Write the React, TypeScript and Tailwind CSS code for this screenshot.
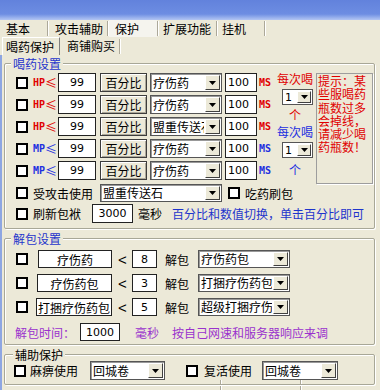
import React from "react";

type P = { className?: string; children?: React.ReactNode };

const num = "font-['DejaVu_Sans',sans-serif] text-[11px]";
const mono = "font-['DejaVu_Sans_Mono',monospace] text-[10px] font-bold";

function Check({ className = "" }: P) {
  return <span className={`block h-[12px] w-[12px] shrink-0 border-2 border-black bg-white ${className}`} />;
}

// white edit box
function Box({ className = "", children }: P) {
  return (
    <div className={`flex h-full shrink-0 items-center border border-[#222] bg-white ${className}`}>
      {children}
    </div>
  );
}

function Btn({ className = "", children }: P) {
  return (
    <div
      className={`flex h-full shrink-0 items-center justify-center border border-[#3c3c3c] bg-[#ECE9D8] shadow-[inset_1px_1px_0_#fff,inset_-1px_-1px_0_#aca899] ${className}`}
    >
      {children}
    </div>
  );
}

function Arrow() {
  return (
    <svg width="7" height="4" viewBox="0 0 7 4">
      <path d="M0 0h7L3.5 4z" fill="#000" />
    </svg>
  );
}

function Combo({ className = "", children }: P) {
  return (
    <div className={`flex h-full shrink-0 border border-[#555] bg-white shadow-[inset_1px_1px_0_#999] ${className}`}>
      <span className="flex min-w-0 flex-1 items-center overflow-hidden whitespace-nowrap pl-[2px] leading-none">
        {children}
      </span>
      <span className="m-[1px] flex w-[15px] shrink-0 items-center justify-center border border-white border-r-[#404040] border-b-[#404040] bg-[#ECE9D8]">
        <Arrow />
      </span>
    </div>
  );
}

function Sep() {
  return <span className="h-[15px] w-[2px] shrink-0 self-center border-l border-r border-[#aca899] border-r-white" />;
}

function Group({ title, className = "", titleClass = "", children }: P & { title: string; titleClass?: string }) {
  return (
    <div
      className={`relative ml-[2px] w-[371px] shrink-0 rounded-[2px] border border-[#a8a797] shadow-[inset_1px_1px_0_#fff,1px_1px_0_#fff] ${className}`}
    >
      <span className={`absolute top-[-7px] bg-[#ECE9D8] px-[2px] leading-[13px] ${titleClass}`}>{title}</span>
      {children}
    </div>
  );
}

function PotRow({ kind, item }: { kind: "HP" | "MP"; item: string }) {
  const color = kind === "HP" ? "text-[#e00000]" : "text-[#1d2fe0]";
  return (
    <div className="flex h-[19px] items-center">
      <Check className="ml-[11px]" />
      <span className={`ml-[5px] flex w-[22px] items-center ${color}`}>
        <span className={mono}>{kind}</span>
        <span className="text-[12px] leading-none">≤</span>
      </span>
      <Box className={`ml-[3px] w-[38px] justify-center ${num}`}>99</Box>
      <Btn className="ml-[4px] w-[47px]">百分比</Btn>
      <Combo className="ml-[3px] w-[72px]">{item}</Combo>
      <Box className={`ml-[3px] w-[32px] pl-[2px] ${num}`}>100</Box>
      <span className={`ml-[2px] ${mono} ${color}`}>MS</span>
    </div>
  );
}

function SmallCombo({ className = "" }: P) {
  return (
    <div className={`flex h-[16px] w-[31px] self-end border border-[#555] bg-white ${className}`}>
      <span className={`flex flex-1 items-center pl-[2px] ${num}`}>1</span>
      <span className="m-[1px] flex w-[14px] items-center justify-center border border-white border-r-[#404040] border-b-[#404040] bg-[#ECE9D8]">
        <Arrow />
      </span>
    </div>
  );
}

function UnpackRow({ label, n, item, lab }: { label: string; n: string; item: string; lab: string }) {
  return (
    <div className="flex h-[18px] items-center">
      <Check className="ml-[11px]" />
      <Box className={`justify-center whitespace-nowrap ${lab}`}>{label}</Box>
      <span className="ml-[6px] w-[7px] font-['Liberation_Sans',sans-serif] text-[15px] leading-none">&lt;</span>
      <Box className={`ml-[7px] w-[25px] justify-center ${num}`}>{n}</Box>
      <span className="ml-[8px]">解包</span>
      <Combo className="ml-[9px] w-[92px]">{item}</Combo>
    </div>
  );
}

export default function App() {
  return (
    <div className="relative flex h-[390px] w-[380px] flex-col overflow-hidden bg-[#ECE9D8] font-['Noto_Sans_CJK_SC',sans-serif] text-[12px] leading-[13px] text-black">
      {/* title bar */}
      <div className="h-[20px] shrink-0 bg-linear-to-b from-[#6282dc] via-[#6d8de2] via-70% to-[#b4c6f2]" />

      {/* main tabs */}
      <div className="flex h-[17px] shrink-0 items-center leading-[17px]">
        <span className="w-[47px] pl-[6px]">基本</span>
        <Sep />
        <span className="w-[58px] pl-[6px]">攻击辅助</span>
        <Sep />
        <span className="h-full w-[48px] bg-[#f5f4ee] pl-[6px]">保护</span>
        <Sep />
        <span className="w-[57px] pl-[4px]">扩展功能</span>
        <Sep />
        <span className="w-[46px] pl-[4px]">挂机</span>
        <Sep />
      </div>

      {/* sub tabs */}
      <div className="flex h-[18px] shrink-0 items-stretch leading-[17px]">
        <span className="ml-[2px] w-[58px] border-t border-l border-white border-r border-r-[#808080] pl-[3px]">喝药保护</span>
        <span className="w-[59px] pl-[7px]">商铺购买</span>
        <Sep />
      </div>

      <div className="flex flex-1 flex-col border-l-2 border-[#8ea6e2]">
        {/* 喝药设置 */}
        <Group title="喝药设置" className="mt-[8px] h-[166px]" titleClass="left-[6px] text-[#1f35cc]">
          <div className="flex pt-[9px]">
            <div className="flex w-[267px] flex-col gap-[3px]">
              <PotRow kind="HP" item="疗伤药" />
              <PotRow kind="HP" item="疗伤药" />
              <PotRow kind="HP" item="盟重传送石" />
              <PotRow kind="MP" item="疗伤药" />
              <PotRow kind="MP" item="疗伤药" />
            </div>
            <div className="ml-[5px] flex w-[36px] flex-col items-center">
              <span className="mt-[-1px] whitespace-nowrap text-[#e00000]">每次喝</span>
              <SmallCombo className="mt-[4px]" />
              <span className="mt-[3px] text-[#e00000]">个</span>
              <span className="mt-[4px] whitespace-nowrap text-[#1d2fe0]">每次喝</span>
              <SmallCombo className="mt-[4px]" />
              <span className="mt-[5px] text-[#1d2fe0]">个</span>
            </div>
            <div className="ml-[3px] h-[111px] w-[57px] border border-[#9d9d9d] pl-[1px] leading-[13.3px] text-[#e00000] shadow-[1px_1px_0_#fff]">
              提示：某些服喝药瓶数过多会掉线，请减少喝药瓶数！
            </div>
          </div>
          <div className="flex h-[18px] items-center">
            <Check className="ml-[11px]" />
            <span className="ml-[5px] w-[60px]">受攻击使用</span>
            <Combo className="ml-[7px] w-[122px]">盟重传送石</Combo>
            <Check className="ml-[6px]" />
            <span className="ml-[5px]">吃药刷包</span>
          </div>
          <div className="mt-[2px] flex h-[19px] items-center">
            <Check className="ml-[11px]" />
            <span className="ml-[5px] w-[48px]">刷新包袱</span>
            <Box className={`ml-[11px] w-[41px] justify-center ${num}`}>3000</Box>
            <span className="ml-[5px]">毫秒</span>
            <span className="ml-[10px] whitespace-nowrap text-[#1f35cc]">百分比和数值切换，单击百分比即可</span>
          </div>
        </Group>

        {/* 解包设置 */}
        <Group title="解包设置" className="mt-[9px] h-[107px]" titleClass="left-[6px] text-[#1f35cc]">
          <div className="flex flex-col gap-[6px] pt-[11px]">
            <UnpackRow label="疗伤药" n="8" item="疗伤药包" lab="ml-[10px] w-[74px]" />
            <UnpackRow label="疗伤药包" n="3" item="打捆疗伤药包" lab="ml-[9px] w-[75px]" />
            <UnpackRow label="打捆疗伤药包" n="5" item="超级打捆疗伤药包" lab="ml-[8px] w-[76px]" />
          </div>
          <div className="mt-[7px] flex h-[18px] items-center text-[#9a32cd]">
            <span className="ml-[10px] w-[60px]">解包时间：</span>
            <Box className={`ml-[5px] w-[40px] justify-center text-black ${num}`}>1000</Box>
            <span className="ml-[15px]">毫秒</span>
            <span className="ml-[13px] whitespace-nowrap">按自己网速和服务器响应来调</span>
          </div>
        </Group>

        {/* 辅助保护 */}
        <Group title="辅助保护" className="mt-[9px] h-[31px]" titleClass="left-[8px]">
          <div className="flex h-[19px] items-center pt-0 mt-[6px]">
            <Check className="ml-[9px]" />
            <span className="ml-[4px] w-[48px]">麻痹使用</span>
            <Combo className="ml-[12px] w-[75px]">回城卷</Combo>
            <Check className="ml-[21px]" />
            <span className="ml-[6px] w-[48px]">复活使用</span>
            <Combo className="ml-[10px] w-[76px]">回城卷</Combo>
          </div>
        </Group>

        {/* status strip */}
        <div className="flex h-[5px] shrink-0">
          <span className="w-[218px]" />
          <Sep />
          <span className="ml-[1px] w-[77px]" />
          <Sep />
        </div>
      </div>
    </div>
  );
}
